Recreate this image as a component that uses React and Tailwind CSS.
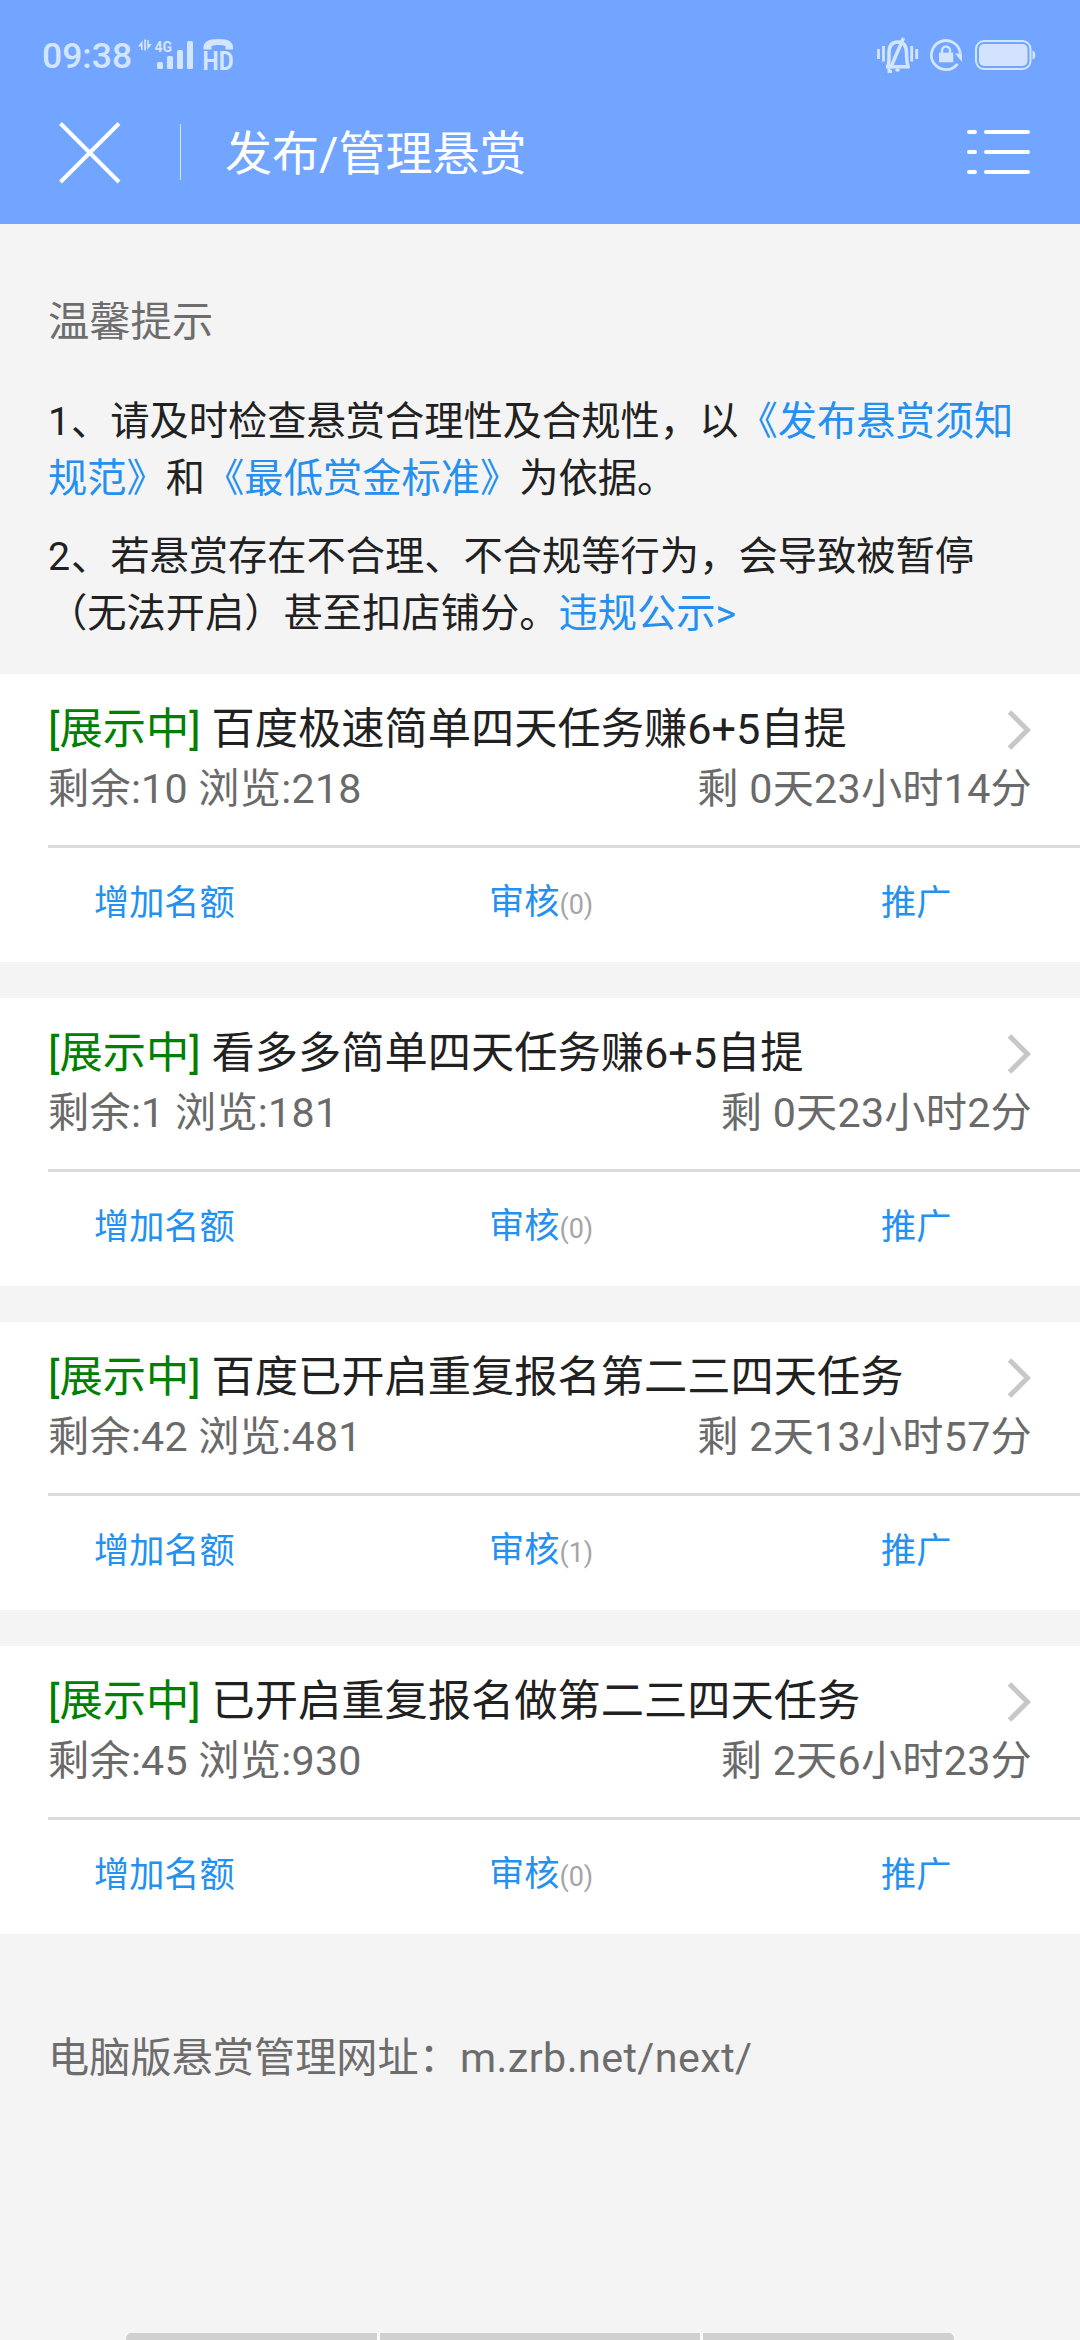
const tasks = [
  { title: '百度极速简单四天任务赚6+5自提', left: 10, views: 218, time: '0天23小时14分', audit: 0 },
  { title: '看多多简单四天任务赚6+5自提', left: 1, views: 181, time: '0天23小时2分', audit: 0 },
  { title: '百度已开启重复报名第二三四天任务', left: 42, views: 481, time: '2天13小时57分', audit: 1 },
  { title: '已开启重复报名做第二三四天任务', left: 45, views: 930, time: '2天6小时23分', audit: 0 },
];

function SignalIcons() {
  return (
    <svg className="ml-[6px] h-[40px] w-[98px] overflow-visible" viewBox="0 0 98 40" fill="#d3e5ff">
      <path d="M0.500 11.800 L4.600 6.500 V16 H3 V12.500 H0.500Z M6.200 5.500 H8 V16.500 H6.200Z M9.200 6 H10.800 V10 H13.800 L9.200 16Z" />
      <text x="16.500" y="17.800" fontSize="14" fontWeight="700" fontFamily="Roboto, sans-serif">4G</text>
      <rect x="19" y="28" width="6" height="7" rx="1.500" />
      <rect x="29" y="22" width="6" height="13" rx="1.500" />
      <rect x="39" y="16" width="6" height="19" rx="1.500" />
      <rect x="49" y="7" width="6" height="28" rx="1.500" />
      <path d="M65.500 15.500 C64.500 8 70 5 80.500 5 C91 5 96 8 95 15.500 H87.500 V12 C84 10.500 77 10.500 73.500 12 V15.500Z" />
      <text x="64.500" y="36" fontSize="25" fontWeight="700" textLength="31" lengthAdjust="spacingAndGlyphs" fontFamily="Roboto, sans-serif">HD</text>
    </svg>
  );
}

function SystemIcons() {
  return (
    <svg className="h-[40px] w-[162px]" viewBox="0 0 162 40" fill="none" stroke="#d3e5ff">
      <path d="M3.500 15 V25 M8.500 12 V27.500 M36.700 12 V27.500 M41.700 15 V25" strokeWidth="2.800" />
      <path d="M11 32.800 H34.800 M13 32 C14.300 28 14 25 14 19 C14 11.500 17 8 22.800 8 C28.500 8 31.500 11.500 31.500 19 C31.500 25 31.500 28 33 32" strokeWidth="3.500" />
      <path d="M28.500 4 L15.500 34" strokeWidth="3.500" />
      <path d="M14 34 V37.500 H17 M20.500 36 H24.500" strokeWidth="3" />
      <path d="M82.500 29.800 A14.500 14.500 0 1 1 85.300 19.500" strokeWidth="2.800" />
      <path d="M80 19.500 H87 V28Z" fill="#d3e5ff" stroke="none" />
      <rect x="64" y="18.700" width="14.300" height="9.600" fill="#d3e5ff" stroke="none" />
      <path d="M67 20 V16.500 A4 4 0 0 1 75 16.500 V20" strokeWidth="2.500" />
      <rect x="101" y="7" width="54.500" height="28" rx="8" strokeWidth="2" />
      <rect x="104" y="10" width="48.500" height="22" rx="5" fill="#d3e2ff" stroke="none" />
      <path d="M157.500 16.500 V25.500 C161.200 25 161.200 17 157.500 16.500Z" fill="#d3e5ff" stroke="none" />
    </svg>
  );
}

function Header() {
  return (
    <header className="flex h-[224px] flex-col bg-[#71a5ff]">
      <div className="flex h-[74px] items-end justify-between pr-[43px] pl-[42px] text-[#d3e5ff]">
        <div className="flex items-end">
          <span className="w-[90px] text-[35.5px] leading-[35px] font-medium whitespace-nowrap">09:38</span>
          <SignalIcons />
        </div>
        <SystemIcons />
      </div>
      <div className="mt-[38px] flex h-[80px] items-center text-white">
        <svg className="ml-[57px] h-[64px] w-[64px]" viewBox="0 0 64 64" fill="none" stroke="white" strokeWidth="4">
          <path d="M3.500 3.500 L62 62 M62 3.500 L3.500 62" />
        </svg>
        <div className="ml-[59px] h-[56px] w-px bg-white/70" />
        <h1 className="ml-[44px] pt-[4px] text-[47px] leading-[64px]">发布/管理悬赏</h1>
        <svg className="mr-[48px] ml-auto h-[48px] w-[66px]" viewBox="0 0 66 48" stroke="white" strokeWidth="4" strokeLinecap="round">
          <path d="M3 4 H9 M20 4 H62 M3 24 H9 M20 24 H62 M3 44 H9 M20 44 H62" />
        </svg>
      </div>
    </header>
  );
}

function Link({ children }) {
  return <a className="text-[#2490f0]">{children}</a>;
}

function Tips() {
  return (
    <section className="px-[48px] pt-[68px]">
      <h2 className="text-[41.3px] leading-[60px] text-[#6d6d6d]">温馨提示</h2>
      <div className="mt-[42px] flex flex-col gap-[21px] text-[39.27px] leading-[57px] whitespace-nowrap text-[#212121]">
        <p>
          <span className="tracking-[0.8px]">1</span>、请及时检查悬赏合理性及合规性，以<Link>《发布悬赏须知<br />规范》</Link>和<Link>《最低赏金标准》</Link>为依据。
        </p>
        <p>
          <span className="tracking-[0.8px]">2</span>、若悬赏存在不合理、不合规等行为，会导致被暂停<br />（无法开启）甚至扣店铺分。<Link>违规公示&gt;</Link>
        </p>
      </div>
    </section>
  );
}

function TaskCard({ task }) {
  return (
    <article className="h-[288px] bg-white">
      <div className="flex h-[171px] flex-col pt-[26px] pr-[48px] pl-[48px]">
        <div className="flex h-[59px] items-center justify-between">
          <h3 className="text-[43.25px] leading-[59px] text-[#212121]">
            <span className="text-[#008000]">[展示中]</span> {task.title}
          </h3>
          <svg className="mr-px h-[40px] w-[24px]" viewBox="0 0 24 40" fill="none" stroke="#c7c7c7" strokeWidth="5">
            <path d="M2.500 2 L20.500 20 L2.500 38" />
          </svg>
        </div>
        <div className="flex h-[60px] justify-between text-[41.2px] leading-[60px] tracking-[0.25px] text-[#6a6a6a]">
          <span>剩余:{task.left} 浏览:{task.views}</span>
          <span>剩 {task.time}</span>
        </div>
      </div>
      <div className="ml-[48px] h-[3px] bg-[#dcdcdc]" />
      <div className="flex h-[110px] items-center pl-[94px] text-[35.2px] leading-[50px] text-[#2490f0]">
        <span className="w-[395px]">增加名额</span>
        <span className="w-[392px]">
          审核<small className="text-[27px] text-[#a5a5a5]">({task.audit})</small>
        </span>
        <span>推广</span>
      </div>
    </article>
  );
}

function NavHints() {
  return (
    <div className="mx-auto mt-auto flex h-[7px] gap-[3px] bg-[#fbfbfb]">
      <div className="h-full w-[251px] rounded-tl-[5px] bg-[#d0d0d0]" />
      <div className="h-full w-[320px] bg-[#d0d0d0]" />
      <div className="h-full w-[251px] rounded-tr-[5px] bg-[#d0d0d0]" />
    </div>
  );
}

export default function App() {
  return (
    <main className="flex h-[2340px] w-[1080px] flex-col overflow-hidden bg-[#f4f4f4] font-[Roboto,'Noto_Sans_CJK_SC',sans-serif]" lang="zh-CN">
      <Header />
      <Tips />
      <div className="mt-[31px] flex flex-col gap-[36px]">
        {tasks.map((task) => (
          <TaskCard key={task.title} task={task} />
        ))}
      </div>
      <p className="mt-[94px] ml-[48px] text-[41.2px] leading-[60px] text-[#6d6d6d]">
        电脑版悬赏管理网址：<span className="tracking-[0.45px]">m.zrb.net/next/</span>
      </p>
      <NavHints />
    </main>
  );
}
